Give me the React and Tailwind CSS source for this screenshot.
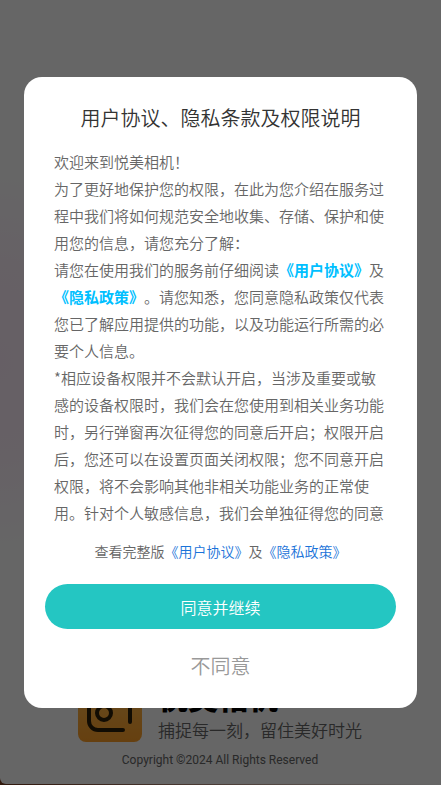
const BODY_LINK = "font-bold text-[#00bfff]";
const FOOT_LINK = "text-[#1a73d9]";

const AppIcon = () => (
	<svg viewBox="0 0 64 64" className="size-16 shrink-0" aria-hidden="true">
		<defs>
			<linearGradient id="iconFill" x1="0" y1="0" x2="0" y2="1">
				<stop offset="0" stopColor="#ffbe55" />
				<stop offset="1" stopColor="#ffa028" />
			</linearGradient>
		</defs>
		<rect width="64" height="64" rx="8" fill="url(#iconFill)" />
		<g fill="none" stroke="#2c1f08" strokeWidth="4" strokeLinecap="round">
			<path d="M45 52H20a9 9 0 0 1-9-9V21a9 9 0 0 1 9-9h23a9 9 0 0 1 9 9v23" />
			<circle cx="26" cy="35" r="7" />
			<path d="M40 22h3" />
		</g>
	</svg>
);

const Splash = () => (
	<main
		className="mr-px flex min-h-[calc(100vh-1px)] flex-col items-center justify-end
					rounded-b-md bg-white
					bg-[radial-gradient(ellipse_120px_190px_at_0px_46%,#ffeefc_0%,#fff2fd_50%,#ffffff_100%)]
					pb-4"
	>
		<div className="flex items-center gap-4">
			<AppIcon />
			<div>
				<h1 className="mb-1 text-[30px] leading-9 font-black text-black">悦美相机</h1>
				<p className="text-[17px] leading-6 text-[#666]">
					捕捉每一刻，留住美好时光
				</p>
			</div>
		</div>
		<p className="mt-[10px] font-['Roboto',sans-serif] text-xs leading-4 font-normal text-[#666]">
			Copyright ©2024 All Rights Reserved
		</p>
	</main>
);

const ConsentDialog = () => (
	<div className="fixed inset-0 flex items-center justify-center bg-black/60 px-6">
		<section
			role="dialog"
			aria-modal="true"
			aria-labelledby="consent-title"
			className="w-full max-w-md rounded-[18px] bg-white px-[21px] py-6"
		>
			<h2 id="consent-title" className="text-center text-xl leading-[34px] font-[350] text-[#333]">
				用户协议、隐私条款及权限说明
			</h2>

			<div
				className="mt-[13px] max-h-[378px] overflow-hidden px-[9px]
							text-[15px] leading-[27px] text-[#666]"
			>
				<p>欢迎来到悦美相机！</p>
				<p>
					为了更好地保护您的权限，在此为您介绍在服务过程中我们将如何规范安全地收集、存储、保护和使用您的信息，请您充分了解：
				</p>
				<p>
					请您在使用我们的服务前仔细阅读
					<a href="#terms" className={BODY_LINK}>《用户协议》</a>及
					<a href="#privacy" className={BODY_LINK}>《隐私政策》</a>
					。请您知悉，您同意隐私政策仅代表您已了解应用提供的功能，以及功能运行所需的必要个人信息。
				</p>
				<p>
					*相应设备权限并不会默认开启，当涉及重要或敏感的设备权限时，我们会在您使用到相关业务功能时，另行弹窗再次征得您的同意后开启；权限开启后，您还可以在设置页面关闭权限；您不同意开启权限，将不会影响其他非相关功能业务的正常使用。针对个人敏感信息，我们会单独征得您的同意
				</p>
			</div>

			<p className="mt-[15px] text-center text-sm leading-5 text-[#666]">
				查看完整版
				<a href="#terms" className={FOOT_LINK}>《用户协议》</a>及
				<a href="#privacy" className={FOOT_LINK}>《隐私政策》</a>
			</p>

			<button
				type="button"
				className="mt-[23px] h-[45px] w-full rounded-full bg-[#24c6c2] text-base text-white"
			>
				同意并继续
			</button>
			<button type="button" className="mt-[19px] h-9 w-full text-xl text-[#999]">
				不同意
			</button>
		</section>
	</div>
);

export default function App() {
	return (
		<div
			lang="zh-CN"
			className="min-h-screen bg-linear-to-r from-[#7a3c20] to-[#ffffff]
						font-['Noto_Sans_CJK_SC',sans-serif] font-[350]
						[text-spacing-trim:space-all]"
		>
			<Splash />
			<ConsentDialog />
		</div>
	);
}
